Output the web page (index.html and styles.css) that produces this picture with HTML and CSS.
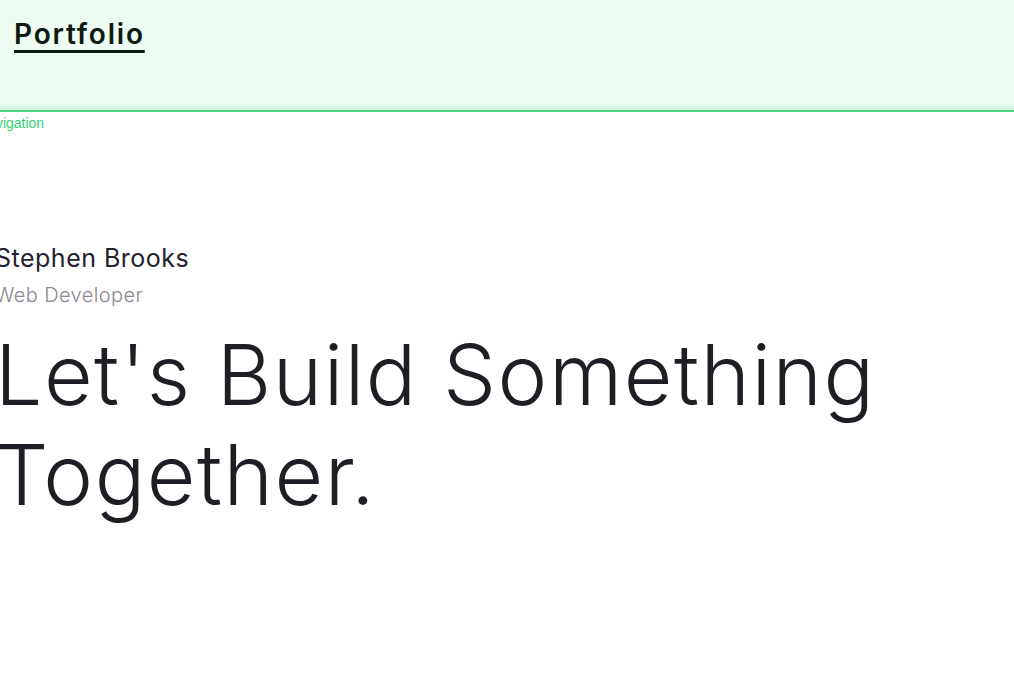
FILE: index.html
```html
<!DOCTYPE html>
<html lang="en">
<head>
<meta charset="utf-8">
<title>Portfolio</title>
<link rel="stylesheet" href="styles.css">
</head>
<body>
<header class="site-header">
  <a class="brand" href="#">Portfolio</a>
</header>
<nav class="nav-label">Navigation</nav>
<main class="hero">
  <p class="hero-name">Stephen Brooks</p>
  <p class="hero-role">Web Developer</p>
  <h1 class="hero-title">Let's Build Something Together.</h1>
</main>
</body>
</html>
```
FILE: styles.css
```css
* { box-sizing: border-box; }
html, body { margin: 0; padding: 0; background: #ffffff; overflow: hidden; }
body { font-family: "Inter", "Open Sans", sans-serif; color: #1d1d22; }

.site-header {
  height: 112px;
  background: #edfbf2;
  border-bottom: 2px solid #4fd786;
  box-shadow: inset 0 -4px 0 #d6f6e2;
  padding: 17px 14px 0;
}
.brand {
  font-family: "Inter", sans-serif;
  font-weight: 600;
  font-size: 28px;
  letter-spacing: 1.8px;
  color: #0c1a10;
  text-decoration: underline;
  text-decoration-thickness: 3px;
  text-underline-offset: 6px;
}

.nav-label {
  font-family: "Liberation Sans", Arial, sans-serif;
  font-size: 14px;
  color: #2fd574;
  margin: 3px 0 0 -22px;
  line-height: 16px;
}

.hero {
  margin: 112px 0 0 -5px;
}
.hero-name {
  margin: 0;
  font-size: 25px;
  font-weight: 400;
  line-height: 30px;
  color: #25212f;
  letter-spacing: 0.5px;
}
.hero-role {
  margin: 9px 0 0;
  font-size: 20px;
  font-weight: 300;
  line-height: 26px;
  color: #8c8790;
  letter-spacing: 0.4px;
}
.hero-title {
  margin: 17px 0 0;
  font-size: 84px;
  font-weight: 300;
  line-height: 100px;
  color: #1e1f24;
  letter-spacing: 1.5px;
  max-width: 930px;
}
```
